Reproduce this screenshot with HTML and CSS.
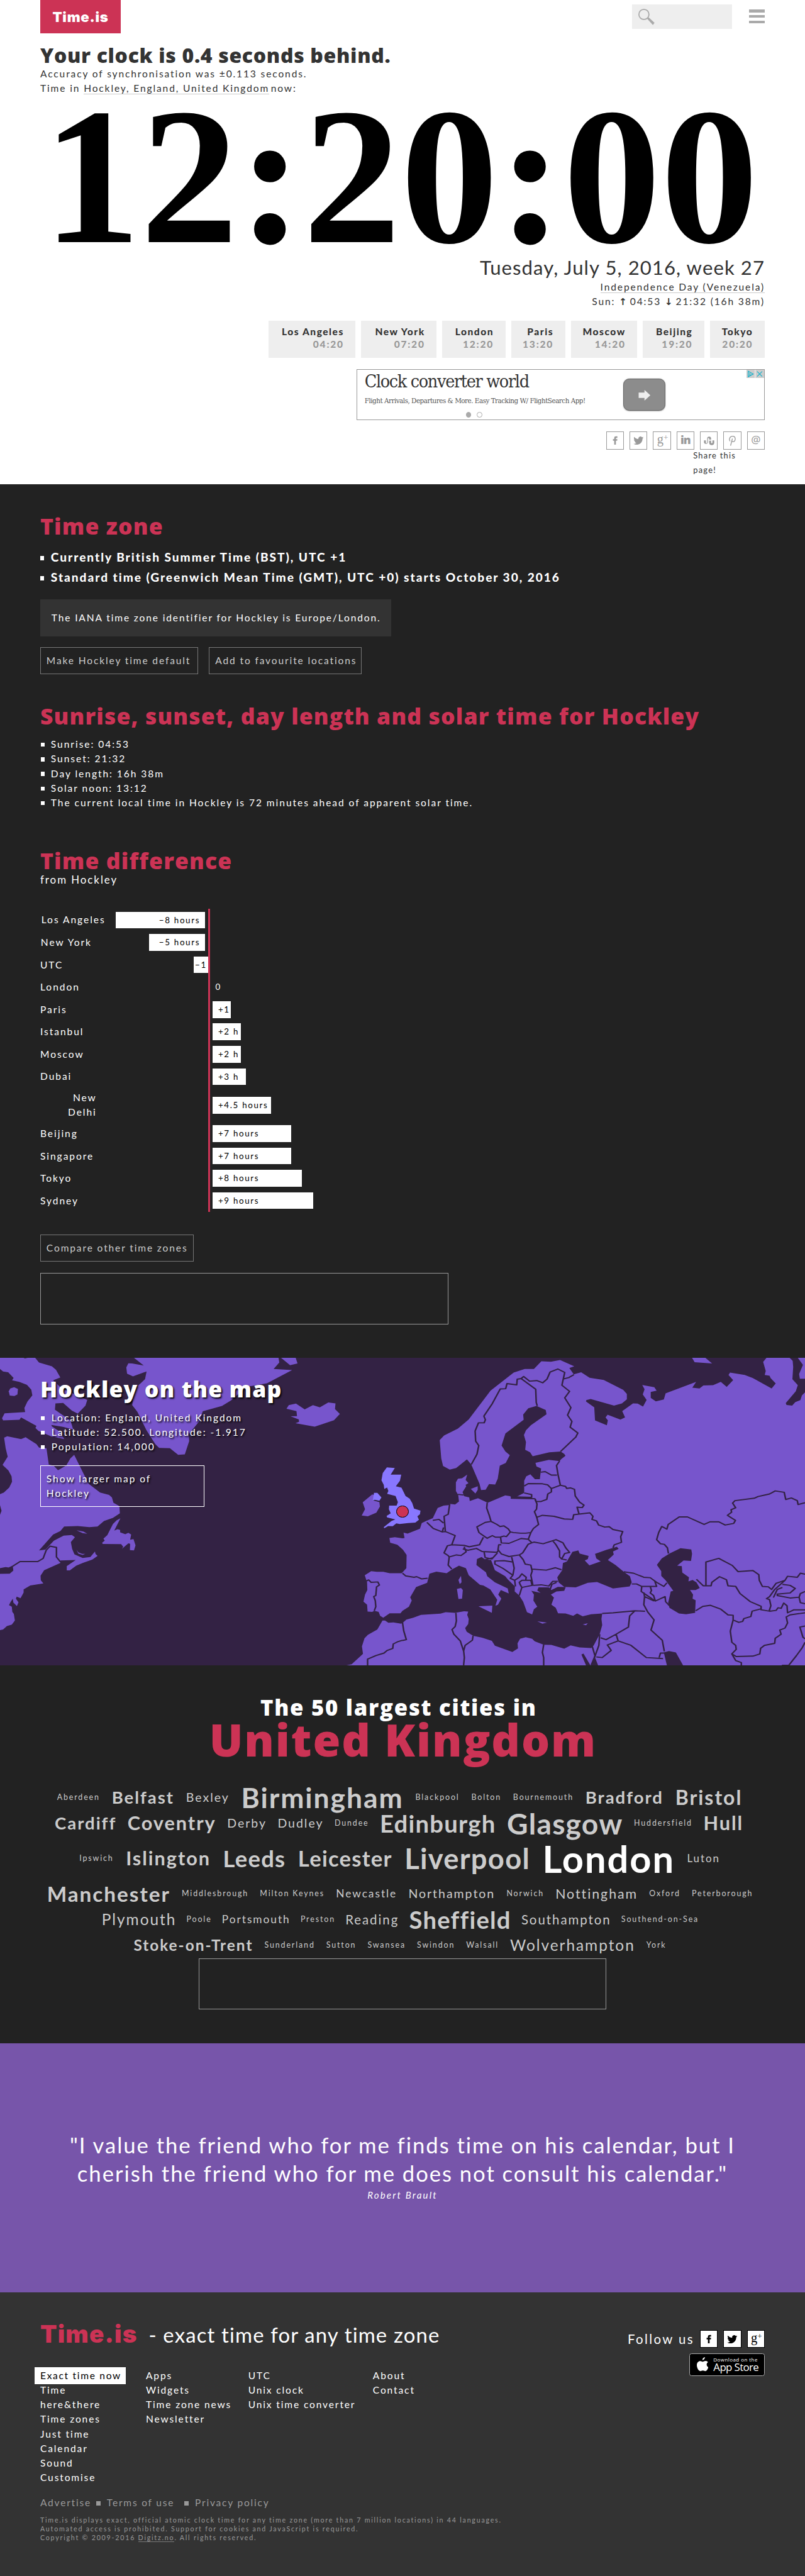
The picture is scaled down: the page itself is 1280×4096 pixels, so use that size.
FILE: index.html
```html
<!DOCTYPE html>
<html lang="en">
<head>
<meta charset="utf-8">
<title>Time in Hockley, England, United Kingdom now</title>
<link rel="stylesheet" href="styles.css">
</head>
<body>
<svg width="0" height="0" class="defs" aria-hidden="true">
  <symbol id="fb" viewBox="0 0 32 32"><path d="M14 24v-7.500h-2.500v-3H14v-2.200C14 8.800 15.500 8 17.500 8H20v3h-1.600c-.9 0-1.200.4-1.200 1.200v1.300H20l-.4 3h-2.400V24z"/></symbol>
  <symbol id="tw" viewBox="0 0 32 32"><path d="M25.500 10.500c-.7.300-1.400.5-2.200.6.800-.5 1.400-1.200 1.700-2.100-.8.400-1.600.8-2.500.9a3.900 3.900 0 0 0-6.700 3.600c-3.300-.2-6.200-1.700-8.100-4.100-1 1.800-.5 4 1.200 5.200-.6 0-1.200-.2-1.800-.5 0 1.900 1.300 3.500 3.100 3.900-.6.100-1.200.2-1.800.1.500 1.500 1.900 2.600 3.700 2.700A7.900 7.900 0 0 1 6.400 22.400c1.700 1.100 3.800 1.700 6 1.700 7.300 0 11.400-6.100 11.100-11.600.8-.5 1.500-1.200 2-2z"/></symbol>
  <symbol id="st" viewBox="0 0 32 32"><path d="M6.500 16h3.500v4a1.300 1.300 0 0 0 2.600 0v-7.500a3.700 3.700 0 0 1 7.400 0V14l-2.100.7-1.500-.7v-1.400a1.200 1.200 0 0 0-2.400 0V20a4 4 0 0 1-7.500 0zM16.400 16l1.500.7 2.100-.7v4a1.300 1.300 0 0 0 2.600 0v-4H26v4a4.300 4.300 0 0 1-9.600 0z"/></symbol>
  <symbol id="pi" viewBox="0 0 32 32"><path d="M12.800 26L16.300 12.500M11.800 17.500C9 13.500 11.500 8 16.800 8c6.700 0 6 10.500.8 10.500-1.400 0-2.300-.7-2.600-1.800" fill="none" stroke="currentColor" stroke-width="1.600"/></symbol>
</svg>

<header class="top">
  <div class="bar">
    <a class="logo">Time.is</a>
    <div class="tools">
      <div class="search"><svg viewBox="0 0 30 30"><circle cx="10" cy="10" r="9" fill="none" stroke="#aaa" stroke-width="2"/><path d="M15 17l3-2 11 10-3 4z" fill="#aaa"/></svg></div>
      <div class="menu"><i></i><i></i><i></i></div>
    </div>
  </div>
  <h1>Your clock is 0.4 seconds behind.</h1>
  <p class="sync">Accuracy of synchronisation was ±0.113 seconds.</p>
  <p class="sync now">Time in <a>Hockley, England, United Kingdom</a><span>now:</span></p>
  <div class="clock">12:20:00</div>
  <div class="date">Tuesday, July 5, 2016, week 27</div>
  <p class="right"><a>Independence Day (Venezuela)</a></p>
  <p class="right sun">Sun: <b>↑</b> 04:53 <b>↓</b> 21:32 (16h 38m)</p>
  <div class="worldclocks">
    <div class="w1">Los Angeles<time>04:20</time></div>
    <div class="w2">New York<time>07:20</time></div>
    <div class="w3">London<time>12:20</time></div>
    <div class="w4">Paris<time>13:20</time></div>
    <div class="w5">Moscow<time>14:20</time></div>
    <div class="w6">Beijing<time>19:20</time></div>
    <div class="w7">Tokyo<time>20:20</time></div>
  </div>
  <div class="ad">
    <div class="adtext">
      <div class="adtitle">Clock converter world</div>
      <div class="adsub">Flight Arrivals, Departures &amp; More. Easy Tracking W/ FlightSearch App!</div>
      <div class="dots"><i></i><i></i></div>
    </div>
    <div class="adbtn"><svg viewBox="0 0 22 20"><path d="M0 5h11V0l11 10-11 10v-5H0z" fill="#eee"/></svg></div>
    <div class="choices"><svg viewBox="0 0 32 15"><path d="M15.500 0v15" stroke="#fff"/><path d="M3 2.500v10l9-5zM6 6v4M19 3l9 9M28 3l-9 9" fill="none" stroke="#1bb3cc" stroke-width="1.400"/></svg></div>
  </div>
  <div class="share">
    <span><svg><use href="#fb"/></svg></span>
    <span><svg><use href="#tw"/></svg></span>
    <span class="gp">g<sup>+</sup></span>
    <span class="in">in</span>
    <span><svg><use href="#st"/></svg></span>
    <span><svg><use href="#pi"/></svg></span>
    <span class="at">@</span>
  </div>
  <p class="sharetext">Share this<br>page!</p>
</header>

<main class="dark">
  <h2 class="tz">Time zone</h2>
  <ul class="big">
    <li class="b1">Currently British Summer Time (BST), UTC +1</li>
    <li>Standard time (Greenwich Mean Time (GMT), UTC +0) starts October 30, 2016</li>
  </ul>
  <div class="iana">The IANA time zone identifier for Hockley is Europe/London.</div>
  <div class="buttons"><a class="btn m1">Make Hockley time default</a><a class="btn m2">Add to favourite locations</a></div>
  <h2 class="sunhead">Sunrise, sunset, day length and solar time for Hockley</h2>
  <ul class="list">
    <li>Sunrise: 04:53</li>
    <li>Sunset: 21:32</li>
    <li>Day length: 16h 38m</li>
    <li>Solar noon: 13:12</li>
    <li>The current local time in Hockley is 72 minutes ahead of apparent solar time.</li>
  </ul>
  <h2 class="diffhead">Time difference</h2>
  <p class="from">from Hockley</p>
  <div class="chart">
    <div class="row"><span>Los Angeles</span><div class="neg"><i style="width:160px">−8 hours</i></div><div class="pos"></div></div>
    <div class="row"><span>New York</span><div class="neg"><i style="width:100px">−5 hours</i></div><div class="pos"></div></div>
    <div class="row"><span>UTC</span><div class="neg utc"><i style="width:25px">−1</i></div><div class="pos"></div></div>
    <div class="row"><span>London</span><div class="neg"></div><div class="pos zero">0</div></div>
    <div class="row"><span>Paris</span><div class="neg"></div><div class="pos"><i style="width:33px">+1</i></div></div>
    <div class="row"><span>Istanbul</span><div class="neg"></div><div class="pos"><i style="width:50px">+2 h</i></div></div>
    <div class="row"><span>Moscow</span><div class="neg"></div><div class="pos"><i style="width:50px">+2 h</i></div></div>
    <div class="row"><span>Dubai</span><div class="neg"></div><div class="pos"><i style="width:60px">+3 h</i></div></div>
    <div class="row tall"><span>New<br>Delhi</span><div class="neg"></div><div class="pos"><i style="width:105px">+4.5 hours</i></div></div>
    <div class="row"><span>Beijing</span><div class="neg"></div><div class="pos"><i style="width:140px">+7 hours</i></div></div>
    <div class="row"><span>Singapore</span><div class="neg"></div><div class="pos"><i style="width:140px">+7 hours</i></div></div>
    <div class="row"><span>Tokyo</span><div class="neg"></div><div class="pos"><i style="width:160px">+8 hours</i></div></div>
    <div class="row"><span>Sydney</span><div class="neg"></div><div class="pos"><i style="width:180px">+9 hours</i></div></div>
  </div>
  <div class="buttons cmp"><a class="btn m3">Compare other time zones</a></div>
  <div class="slot"></div>
</main>

<section class="map">
  <svg class="world" viewBox="0 25 3136 1513" preserveAspectRatio="none">
    <g class="land">
      <path d="M0 25H92L97 28L108 25H137L152 48L202 67L218 84L235 122L207 136L240 175L340 232L333 260L303 300L280 285L246 247L216 249L214 280L250 312L275 335L285 378L245 365L200 355L202 362L235 390L250 425L200 412L150 385L138 370L142 360L82 318L76 330L12 333L8 322L18 298L98 292L95 272L107 240L126 210L122 182L105 158L75 143L47 136L53 124L32 96L12 92L0 80Z"/>
      <path d="M34 190L40 176L55 170L70 178L68 205L56 213L38 211Z"/>
      <path d="M16 418L28 411L82 425L100 416L142 450L152 467L181 470L190 550L209 556L226 578L258 555L274 520L289 502L345 645L390 688L425 700L436 712L442 738L465 755L467 790L440 813L405 828L380 855L348 858L303 853L250 855L235 878L207 895L152 973L177 969L210 925L248 900L280 897L292 908L276 932L281 965L290 992L322 1010L352 1005L370 978L372 990L380 1000L360 1018L322 1035L297 1048L272 1071L260 1071L260 1050L295 1020L236 1022L235 1035L172 1070L158 1097L159 1120L169 1135L118 1145L92 1165L92 1180L80 1208L65 1200L62 1210L72 1228L66 1247L52 1230L50 1210L42 1225L35 1242L46 1250L48 1275L54 1285L58 1318L46 1338L27 1345L12 1362L0 1365V1088L38 1087L52 1072L50 1052L35 1060L22 1058L0 1063V798L6 778L0 750V696L15 688L36 663L47 635L45 608L33 580L10 552L30 512L22 470Z"/>
      <path d="M469 815L445 875L458 868L468 872V884L488 893L500 886L511 895L507 920L520 917L528 948L522 973L506 971L507 940L500 938L475 965L480 955L472 942L400 941L398 935L408 925L403 915L418 898L440 843L455 824Z"/>
      <path d="M298 874L325 880L340 891L322 888ZM298 970L305 982L320 990L332 990L322 995L305 988Z"/>
      <path d="M522 25H1085L1088 48L1066 80L1138 85L1040 150L960 168L900 235L865 262L790 288L775 340L735 400L737 435L720 500L694 502L662 470L620 468L605 450L570 380L535 290L515 258L520 200L540 160L565 130L571 92L560 97L518 116L495 103L492 72L500 52L515 53L560 63Z"/>
      <path d="M1095 25H1152L1159 53L1130 61Z"/>
      <path d="M1116 276L1125 258L1153 250L1187 279L1219 258L1246 269L1279 245L1307 249L1305 277L1324 301L1301 332L1226 364L1151 347L1165 340L1164 328L1132 313L1157 312L1155 287Z"/>
      <path d="M1450 697L1456 700L1454 727L1478 735L1480 757L1466 787L1433 805L1409 801L1422 770L1413 736Z"/>
    </g>
    <g class="uk">
      <path d="M1507 564L1538 567L1522 600L1563 600L1558 630L1542 657L1564 664L1580 705L1596 718L1606 740L1613 767L1638 777L1636 795L1626 805L1632 822L1618 836L1590 838L1557 843L1544 840L1530 854L1512 853L1497 864L1495 858L1525 828L1540 820L1508 810L1506 803L1522 790L1515 770L1516 752L1545 752L1550 735L1541 705L1508 694L1513 680L1508 663L1497 670L1495 650L1486 628L1491 592Z"/>
      <path d="M1457 690L1470 690L1486 712L1478 728L1460 724L1452 727Z"/>
    </g>
    <g transform="translate(1568 0)">
      <g class="land">
        <path d="M-51 912L-30 908L0 913L8 912L4 885L20 890L68 866L75 838L92 828L118 814L137 764L160 752L180 750L184 744L205 747L220 732L217 700L208 680L208 638L216 620L232 618L252 600L246 626L257 642L246 650L248 658L234 686L240 706L260 712L262 730L294 716L315 728L332 738L400 702L420 706L424 716L443 710L474 690V630L482 608L498 598L516 622L535 622L540 570L522 560L518 542L570 527L612 533L618 524L635 507L630 498L616 486L572 490L507 509L497 490L478 478L481 440L473 405L481 382L500 357L561 303L558 282L522 262L490 273L470 304L472 330L401 397L386 457L401 486L418 504L402 543L379 556L371 620L361 649L337 646L324 674L306 676L300 645L268 550L251 525L209 567L184 575L158 557L151 520L145 430L162 407L216 373L258 328L343 187L433 98L476 80L512 80L541 42L578 44L614 36L669 67L650 75L667 106L696 96L729 123L784 134L860 183L874 203V229L855 249L824 260L733 228L716 233L715 240L747 269L750 333L796 357L800 333L791 318L799 305L849 329L867 318L856 287L898 249L916 250L937 265L951 232L936 205L943 180L934 159L981 170L990 187L967 193V222L987 239L1018 230L1025 200L1144 143L1129 172L1157 176L1172 161L1210 160L1240 143L1263 168L1288 135L1270 109L1276 98L1333 109L1365 125L1438 176L1454 151L1434 125L1430 113L1411 109L1415 90L1405 45L1418 25H1508L1520 40L1522 70L1519 130L1540 160L1532 190L1493 248L1496 257L1518 260L1530 243L1550 233L1556 210L1568 195V1538H-218L-198 1533L-154 1482L-158 1445L-148 1405L-135 1388L-98 1362L-78 1318L-68 1318L-55 1329L-35 1327L-6 1333L0 1330L15 1313L42 1304L72 1290L148 1284L168 1277L205 1280L240 1272L256 1274L252 1290L258 1310L256 1335L244 1355L250 1373L275 1393L310 1402L348 1418L360 1442L428 1473L450 1455L448 1430L458 1408L480 1400L505 1408L515 1420L550 1437L580 1438L630 1456L655 1440L690 1450L735 1453L745 1440L768 1385L778 1340L775 1310L778 1283L735 1287L702 1297L680 1283L665 1295L635 1283L606 1282L597 1255L580 1240L590 1205L578 1190L600 1175L630 1172L636 1153L605 1152L580 1168L570 1155L530 1155L525 1170L538 1182L502 1172L512 1190L510 1220L525 1250L512 1262L505 1288L485 1277L470 1225L455 1195L437 1175L438 1150L410 1115L400 1100L360 1070L345 1020L322 1018L308 1005L290 1015L288 1045L325 1080L330 1100L360 1130L410 1160L414 1185L383 1168L373 1190L385 1210L372 1240L362 1245L369 1216L342 1165L315 1145L302 1142L258 1095L247 1060L220 1048L194 1066L172 1085L132 1077L105 1087L96 1132L53 1153L30 1203L36 1220L25 1250L0 1270L-8 1282H-50L-75 1304L-87 1295L-93 1275L-110 1270L-118 1275L-136 1274L-138 1240L-152 1225L-146 1190L-137 1168L-138 1130L-147 1095L-122 1075L-100 1078H-75L-50 1085H-3L15 1060L16 995L2 970L-20 945L-48 935Z"/>
        <path d="M212 1162L228 1158L235 1168L232 1210L218 1212ZM218 1118L228 1098L230 1130L223 1138ZM296 1248L350 1244L348 1280ZM525 1322L563 1328L545 1333ZM702 1337L722 1331L715 1341ZM266 670L293 657V675L284 693ZM1128 25H1180L1206 53L1138 47ZM1540 25H1568V128H1548L1545 105L1560 60Z"/>
      </g>
      <g class="water">
        <path d="M603 1105L622 1070L625 1035L640 1028L662 980L685 973L690 988L725 1000L722 1015L710 1022L728 1046L772 1027L755 1012L750 990L795 970L835 955L842 965L820 978L823 993L800 1020L830 1045L862 1078L886 1100L893 1130L885 1150L820 1160L758 1128L722 1132L675 1155L630 1152L608 1130Z"/>
        <path d="M991 1044L1010 1012L1040 988L1083 962L1125 968L1128 990L1124 1025L1095 1022L1070 1048L1088 1050L1090 1082L1116 1105L1114 1125L1130 1118L1145 1130L1158 1158L1142 1168L1120 1168L1132 1190L1130 1210L1142 1218L1140 1280L1105 1287L1077 1283L1040 1255L1035 1230L1045 1175L1055 1172L1025 1120L1008 1098L1008 1075Z"/>
        <path d="M1018 1475L1038 1468L1065 1475L1093 1538H1030ZM697 1485L705 1480L732 1538H715ZM735 1538L750 1500L762 1538Z"/>
      </g>
    </g>
    <g class="borders" transform="translate(1568 0)">
      <path d="M-1568 1063L-1546 1058L-1533 1060L-1518 1050L-1490 1028H-1421L-1400 1012L-1388 972L-1373 952L-1348 958V1005L-1332 1030"/>
      <path d="M268 550L290 500L297 457L285 435L283 385L296 345L318 345L323 330L317 312L350 250L381 178L402 177L407 152L445 158L447 130L462 127L519 180L521 245L525 262"/>
      <path d="M462 127L472 117L495 140L523 137L546 148L563 130L575 95L605 80L632 97L621 160L651 190L632 222L656 270L643 307L660 338L653 366L683 395L675 415L616 486M625 130L648 122L668 108"/>
      <path d="M612 533L600 555L606 600L615 652L580 668L565 650L545 645L490 644L474 656M538 588L556 585L580 602H602M474 690L503 698V712L443 710L424 716L516 718M516 718L520 732H540L562 722L566 695L580 685V668M615 652L635 658L640 668L655 665L670 672L673 705L690 735L707 750L700 762L680 760L688 795"/>
      <path d="M516 718L524 745L522 770L514 782L523 810L545 800L590 805L630 818L663 820L667 797L730 788L742 805L738 820L756 828L764 848L788 858L805 856L820 870L858 880L850 905L853 933L825 945L820 960"/>
      <path d="M523 810L530 845L510 865L500 885L480 888H460L432 885L420 882L412 867L395 852L380 855L368 845L345 830L338 800L328 765L330 738M345 830L322 835L290 857L298 885L330 913L350 900L362 908L382 907L395 902L405 905L420 882M500 885L490 918L462 914L415 938L385 936L382 907M490 918L504 935L490 942L468 985L455 995L415 1003L385 990L372 970L375 945H385M504 935L512 932L548 940L585 925L598 920L625 935L636 960L651 983L632 988L620 1015L612 1005V975L598 945L585 925M620 1015L640 1020"/>
      <path d="M216 697L238 700M184 744L178 795L162 805L167 880L205 900L192 945L240 948L260 955L300 945L308 925L315 908M167 880L155 882L120 865L95 835M118 825L142 820L160 838M155 882L160 860M192 945L175 950L162 985L178 998L182 1005L210 995L228 998L248 980L240 955M235 965L255 972L288 963L310 978L368 982L375 970M182 1005L178 1045L192 1065M318 982L322 1008L348 1015L370 985M322 1018L355 1008M0 1085L12 1098L45 1105L55 1102L75 1113L98 1110"/>
      <path d="M360 1025L395 1023L430 1030L435 1060L430 1095L392 1062L360 1040ZM430 1030L425 1005M455 995L470 1018L478 1040L500 1045L505 1075L500 1095L508 1145M505 1065L560 1070L596 1058L620 1068M430 1095L420 1110L437 1120L455 1105L465 1088L482 1105L480 1120H500M455 1130L465 1120L500 1120L505 1145L465 1155L458 1140ZM508 1145L540 1142L570 1148L585 1125H605M437 1120L440 1150M465 1155L455 1195M575 1165L582 1140L600 1130"/>
      <path d="M862 1078L900 1085L940 1105L965 1107L990 1130L1018 1150L1030 1132M893 1138H912L932 1150H990L983 1125M932 1150L930 1175L965 1205L985 1222L1023 1200L1025 1225L1040 1245M965 1150L970 1170L965 1182L978 1195L985 1222M940 1180L943 1200L980 1222M943 1200L940 1240L955 1275L980 1315L968 1365L1012 1415L1020 1470M778 1283L820 1280L905 1270L945 1272M905 1270L885 1295L880 1350L832 1385L793 1412L772 1403M832 1385L840 1418L890 1440L950 1500L1015 1505M840 1418L798 1438L813 1465L778 1500L755 1497M1000 1500L1005 1478L1020 1478M768 1385L765 1440L748 1500"/>
      <path d="M738 1440L750 1492L735 1538M550 1437L545 1475L550 1500V1538M275 1393L272 1415L244 1440L238 1468L225 1418L200 1385L193 1362L205 1348L210 1320L208 1280M238 1465L241 1500L238 1538M0 1328L5 1370L15 1412L0 1416M-136 1538V1508L-103 1490L-72 1478L-60 1465L-38 1455L-36 1433L-20 1423L0 1415M-143 1125L-132 1118L-122 1130L-96 1128L-90 1143L-101 1152L-104 1195L-112 1200L-106 1220L-104 1250L-110 1270"/>
      <path d="M1036 988L1032 960L1020 943L1005 940L990 920L998 885L1010 855L1030 868L1035 845L1078 808H1110L1175 845L1198 832H1232L1257 848L1290 840L1297 825L1266 800L1282 785L1280 773L1298 763L1286 740L1295 728L1370 716L1385 708L1430 695L1452 680L1487 687L1493 722L1515 715L1538 728L1541 747L1568 738"/>
      <path d="M1182 1147V1030L1232 1012L1285 1047L1307 1077L1365 1072L1388 1092L1390 1120L1402 1150L1425 1152L1438 1165L1455 1135L1490 1120L1500 1100L1538 1105L1550 1085L1568 1090M1145 1115L1172 1147H1202L1205 1130L1235 1102L1262 1117L1268 1147L1298 1150L1315 1185L1355 1225L1397 1248V1265L1430 1272L1455 1268L1463 1255L1475 1258L1485 1232L1498 1245L1500 1280L1525 1265H1568M1480 1140L1510 1145L1530 1160L1510 1182L1460 1188V1195L1510 1207L1545 1203L1550 1185L1568 1175M1490 1120L1450 1165L1430 1200L1418 1210L1430 1215L1435 1245L1428 1272M1480 1155L1460 1165L1445 1205M1142 1270L1170 1248L1200 1243L1240 1262L1268 1290L1288 1292V1315L1310 1327L1325 1322L1330 1308L1357 1298L1362 1272L1397 1260M1288 1315L1277 1370L1283 1425L1298 1440L1300 1460L1283 1482L1300 1495L1365 1493L1392 1482L1395 1455L1410 1440L1450 1430L1452 1405L1475 1385L1470 1365L1490 1355L1500 1330L1495 1300L1510 1290L1568 1280M1283 1482L1298 1515L1320 1525V1538M1478 1538H1505L1535 1490L1558 1450L1568 1425M1568 1345L1548 1350L1560 1400L1568 1408M1545 1203L1550 1230L1568 1235"/>
    </g>
  </svg>
  <div class="pin"></div>
  <div class="mapinfo">
    <h2>Hockley on the map</h2>
    <ul class="list">
      <li>Location: England, United Kingdom</li>
      <li>Latitude: 52.500. Longitude: -1.917</li>
      <li>Population: 14,000</li>
    </ul>
    <a class="larger">Show larger map of<br>Hockley</a>
  </div>
</section>

<section class="cities">
  <h2>The 50 largest cities in</h2>
  <h3>United Kingdom</h3>
  <div class="line l1"><a class="c14">Aberdeen</a><a class="c31">Belfast</a><a class="c22">Bexley</a><a class="c50">Birmingham</a><a class="c14">Blackpool</a><a class="c14">Bolton</a><a class="c14">Bournemouth</a><a class="c31">Bradford</a><a class="c36">Bristol</a></div>
  <div class="line l2"><a class="c31">Cardiff</a><a class="c34">Coventry</a><a class="c22">Derby</a><a class="c22">Dudley</a><a class="c14">Dundee</a><a class="c43">Edinburgh</a><a class="c52">Glasgow</a><a class="c14">Huddersfield</a><a class="c34">Hull</a></div>
  <div class="line l3"><a class="c14">Ipswich</a><a class="c34">Islington</a><a class="c41">Leeds</a><a class="c39">Leicester</a><a class="c51">Liverpool</a><a class="c67">London</a><a class="c19">Luton</a></div>
  <div class="line l4"><a class="c38">Manchester</a><a class="c14">Middlesbrough</a><a class="c14">Milton Keynes</a><a class="c20">Newcastle</a><a class="c22">Northampton</a><a class="c14">Norwich</a><a class="c24">Nottingham</a><a class="c14">Oxford</a><a class="c14">Peterborough</a></div>
  <div class="line l5"><a class="c28">Plymouth</a><a class="c14">Poole</a><a class="c20">Portsmouth</a><a class="c14">Preston</a><a class="c23">Reading</a><a class="c43">Sheffield</a><a class="c23">Southampton</a><a class="c14">Southend-on-Sea</a></div>
  <div class="line l6"><a class="c28 bold">Stoke-on-Trent</a><a class="c14">Sunderland</a><a class="c14">Sutton</a><a class="c14">Swansea</a><a class="c14">Swindon</a><a class="c14">Walsall</a><a class="c28">Wolverhampton</a><a class="c14">York</a></div>
  <div class="slot"></div>
</section>

<section class="quote">
  <p class="q1">"I value the friend who for me finds time on his calendar, but I</p>
  <p class="q2">cherish the friend who for me does not consult his calendar."</p>
  <p class="who">Robert Brault</p>
</section>

<footer>
  <div class="ftop">
    <div class="brand"><b>Time.is</b><span>- exact time for any time zone</span></div>
    <div class="follow">
      <div class="frow">Follow us
        <span><svg><use href="#fb"/></svg></span>
        <span><svg><use href="#tw"/></svg></span>
        <span class="gp">g<sup>+</sup></span>
      </div>
      <div class="store">
        <svg viewBox="0 0 21 26"><path d="M14.500 0c.2 2.500-2 5-4.500 5.200C9.700 2.800 12 .4 14.500 0zM20 9c-3.600 2.200-3 7.400.8 9-1.200 3.400-3.200 7-5.400 7-1.800 0-2.400-1.100-4.600-1.100S7.800 25 6.200 25C3 25 0 19 0 14.200 0 9.400 3 6.900 6 6.900c2 0 3.400 1.300 4.800 1.300 1.300 0 2.800-1.400 5.200-1.400 1.600 0 3.100.8 4 2.200z" fill="#fff"/></svg>
        <div><small>Download on the</small><strong>App Store</strong></div>
      </div>
    </div>
  </div>
  <nav>
    <div class="n1"><a class="current">Exact time now</a><a>Time<br>here&amp;there</a><a>Time zones</a><a>Just time</a><a>Calendar</a><a>Sound</a><a>Customise</a></div>
    <div class="n2"><a>Apps</a><a>Widgets</a><a>Time zone news</a><a>Newsletter</a></div>
    <div class="n3"><a>UTC</a><a>Unix clock</a><a>Unix time converter</a></div>
    <div class="n4"><a>About</a><a>Contact</a></div>
  </nav>
  <div class="legal"><a>Advertise</a><i></i><a>Terms of use</a><i class="gap"></i><a>Privacy policy</a></div>
  <p class="fine">Time.is displays exact, official atomic clock time for any time zone (more than 7 million locations) in 44 languages.<br>Automated access is prohibited. Support for cookies and JavaScript is required.<br>Copyright © 2009-2016 <u>Digitz.no</u>. All rights reserved.</p>
</footer>
</body>
</html>
```
FILE: styles.css
```css
html { zoom: 0.888888; background: #333; overflow: hidden; }
* { box-sizing: border-box; }
body, h1, h2, h3, p, ul { margin: 0; padding: 0; }
body {
  height: 4607px;
  overflow: hidden;
  background: #333;
  color: #333;
  font: 17.5px/26px Lato, "Noto Sans", sans-serif;
  letter-spacing: 2.2px;
  font-variant-ligatures: none;
}
.defs { position: absolute; }
svg { display: block; fill: currentColor; }
h1, h2, h3 { font-family: "Open Sans", sans-serif; font-weight: 800; white-space: nowrap; }
p, a, li, span { white-space: nowrap; }
i { font-style: normal; }

/* header */
.top { height: 866px; padding: 0 72px; background: #fff; }
.bar { display: flex; justify-content: space-between; height: 60px; }
.logo { width: 144px; height: 60px; background: #cc3355; color: #fff; font: 900 25px/60px Inter, sans-serif; letter-spacing: .8px; text-align: center; }
.tools { display: flex; padding-top: 8px; }
.search { width: 180px; height: 44px; background: #eee; padding: 8px 12px; }
.search svg { width: 30px; height: 30px; }
.menu { margin: 9px 0 0 30px; display: flex; flex-direction: column; gap: 5px; }
.menu i { width: 28px; height: 5px; background: #aaa; }
h1 { margin-top: 19px; font-size: 36px; line-height: 40px; letter-spacing: .75px; }
.now a { border-bottom: 1px solid #ccc; }
.now span { margin-left: 3px; }
.sync { letter-spacing: 2.1px; }
.clock { margin: 25px 0 0 5px; height: 240px; font: bold 349px/240px "Liberation Serif", serif; letter-spacing: 0; color: #000; white-space: nowrap; }
.date { margin-top: 23px; text-align: right; font-size: 35px; line-height: 40px; letter-spacing: 1.2px; }
.right { margin-top: 2px; text-align: right; letter-spacing: 2.1px; }
.right a { border-bottom: 1px solid #ccc; }
.sun { margin-top: 0; }
.sun b { font: bold 17px/20px "DejaVu Sans", sans-serif; letter-spacing: -1px; }
.worldclocks { display: flex; justify-content: flex-end; gap: 10px; margin-top: 21px; font-weight: 900; }
.worldclocks div { height: 66px; padding: 9px 21px 0 0; background: #eee; text-align: right; line-height: 22px; letter-spacing: 1.7px; white-space: nowrap; }
.worldclocks time { display: block; color: #999; letter-spacing: 2px; }
.w1 { width: 156px; } .w2 { width: 135px; } .w3 { width: 113px; } .w4 { width: 97px; } .w5 { width: 119px; } .w6 { width: 110px; } .w7 { width: 98px; }
.ad { display: flex; width: 730px; height: 92px; margin: 20px 0 0 auto; border: 1px solid #999; letter-spacing: 0; }
.adtext { width: 476px; padding: 4px 0 0 13px; font-family: "DejaVu Serif Condensed", "DejaVu Serif", serif; font-stretch: condensed; white-space: nowrap; }
.adtitle { font-size: 32px; line-height: 36px; letter-spacing: -1.5px; }
.adsub { margin-top: 4px; color: #555; font-size: 13px; line-height: 24px; letter-spacing: -.55px; }
.dots { display: flex; gap: 10px; padding: 8px 0 0 181px; }
.dots i { width: 10px; height: 10px; border-radius: 50%; border: 1px solid #aaa; }
.dots i:first-child { background: #aaa; }
.adbtn { width: 75px; height: 58px; margin-top: 16px; padding: 19px 26px; border: 1px solid #666; border-radius: 11px; background: #8c8c8c; box-shadow: 0 1px 2px #aaa; }
.adbtn svg { width: 22px; height: 19px; }
.choices { width: 32px; height: 15px; margin-left: auto; background: #ccc; }
.share { display: flex; justify-content: flex-end; gap: 10px; margin-top: 20px; color: #999; }
.share span { width: 32px; height: 32px; border: 1px solid #999; }
.share svg, .frow svg { width: 30px; height: 30px; }
.share .gp, .frow .gp { font: 23px/26px "Liberation Serif", serif; letter-spacing: 0; padding-left: 6px; }
.gp sup { font-size: 15px; line-height: 0; vertical-align: 6px; }
.share .in { font: 800 20px/28px "Open Sans", sans-serif; letter-spacing: -1px; text-align: center; }
.share .at { font: 19px/28px "Noto Sans", sans-serif; letter-spacing: 0; text-align: center; }
.sharetext { width: 128px; margin: -2px 0 0 auto; font-size: 14.5px; letter-spacing: 1.4px; }

/* dark column */
.dark { height: 1563px; padding: 51px 72px 0; background: #222; color: #fff; }
.dark h2 { color: #cc3355; font-size: 40px; line-height: 48px; letter-spacing: 1.25px; }
ul { list-style: none; }
li { position: relative; padding-left: 19px; }
li::before { content: ""; position: absolute; left: 1px; top: 10px; width: 7px; height: 7px; background: currentColor; }
.big { margin-top: 14px; font-size: 21.5px; line-height: 36px; font-weight: 900; letter-spacing: 2.2px; }
.big li::before { left: 0; top: 15px; width: 7px; height: 8px; }
.iana { width: 628px; height: 66px; margin-top: 21px; padding: 20px; background: #333; letter-spacing: 2.1px; white-space: nowrap; }
.buttons { display: flex; gap: 20px; margin-top: 20px; }
.btn { height: 48px; padding: 10px; border: 1px solid #777; color: #ccc; letter-spacing: 2.1px; }
.m1 { width: 282px; } .m2 { width: 273px; } .m3 { width: 275px; }
.dark .sunhead { margin-top: 51px; }
.sunhead + .list { margin-top: 14px; }
.diffhead { margin-top: 67px; }
.from { margin-top: -4px; font-size: 19px; }
.chart { margin-top: 40px; }
.row { display: grid; grid-template-columns: 101px 199px 190px; height: 40px; align-items: center; }
.row > span { position: relative; }
.row:nth-child(1) > span { left: 2px; }
.row:nth-child(2) > span { left: 1px; }
.tall { height: 62px; }
.tall > span { text-align: right; }
.neg { height: 100%; padding-right: 5px; display: flex; justify-content: flex-end; align-items: center; }
.pos { height: 100%; border-left: 4px solid #cc3355; padding-left: 5px; display: flex; align-items: center; font-size: 15px; }
.zero { padding-left: 10px; }
.row i { height: 30px; background: #fff; color: #000; font-size: 15px; line-height: 30px; letter-spacing: 1.9px; overflow: hidden; white-space: nowrap; padding-left: 10px; }
.neg i { padding: 0 9px 0 0; text-align: right; }
.utc { padding-right: 0; }
.utc i { padding: 0 2px 0 0; }
.cmp { margin-top: 41px; }
.slot { width: 730px; height: 92px; border: 1px solid #999; }
.dark .slot { margin-top: 20px; }

/* map */
.map { position: relative; height: 550px; background: #332244; color: #fff; overflow: hidden; }
.world { position: absolute; inset: 0; width: 100%; height: 100%; }
.land { fill: #7755cc; }
.uk { fill: #8877ff; }
.water { fill: #332244; }
.borders { fill: none; stroke: #332244; stroke-width: 6; stroke-linejoin: round; }
.pin { position: absolute; left: 709px; top: 264px; width: 22px; height: 22px; border-radius: 50%; border: 2px solid #000; background: #cc3355; }
.mapinfo { position: relative; padding: 31px 72px; text-shadow: 2px 2px 3px #000; }
.mapinfo h2 { font-size: 40px; line-height: 48px; letter-spacing: 1.25px; }
.mapinfo .list { margin-top: 15px; }
.mapinfo li { padding-left: 20px; }
.larger { display: block; width: 294px; height: 74px; margin-top: 20px; padding: 10px; border: 1px solid #fff; }

/* cities */
.cities { height: 676px; padding-top: 52px; background: #222; color: #ccc; text-align: center; }
.cities h2 { margin-left: -14px; color: #fff; font-size: 39px; line-height: 48px; letter-spacing: 1.95px; }
.cities h3 { margin: -8px 0 42px 2px; color: #cc3355; font-size: 80px; line-height: 80px; letter-spacing: 2.1px; }
.line { display: flex; justify-content: space-between; align-items: center; height: 46px; line-height: 46px; }
.l1 { margin: 0 112px 0 102px; }
.l2 { margin: 0 110px 0 98px; }
.l3 { margin: 0 152px 0 142px; height: 80px; }
.l4 { margin: 0 93px 0 84px; }
.l5 { margin: 0 190px 0 182px; }
.l6 { margin: 0 248px 0 239px; }
.c14 { font-size: 14px; letter-spacing: 2.1px; } .c19 { font-size: 19px; } .c20 { font-size: 19.500px; } .c22 { font-size: 22px; } .c23 { font-size: 23px; } .c24 { font-size: 24px; } .c28 { font-size: 27.500px; }
.c31, .c34, .c36, .c38, .c39, .c41, .c43, .c50, .c51, .c52, .c67, .bold { font-weight: 700; }
.c31 { font-size: 31px; } .c34 { font-size: 34.500px; } .c36 { font-size: 36px; } .c38 { font-size: 37.500px; } .c39 { font-size: 39px; } .c41 { font-size: 41px; } .c43 { font-size: 43px; } .c50 { font-size: 50px; } .c51 { font-size: 51px; } .c52 { font-size: 52px; }
.c39, .c41, .c43, .c51, .c52 { letter-spacing: 1.4px; }
.c67 { font-size: 67px; color: #fff; }
.cities .slot { margin: 0 auto; }

/* quote */
.quote { height: 446px; padding-top: 158px; background: #7755aa; color: #fff; text-align: center; }
.quote p { font-size: 39px; line-height: 50px; letter-spacing: 2.2px; }
.quote .who { font-size: 17px; line-height: 28px; font-style: italic; letter-spacing: 2.4px; }

/* footer */
footer { height: 506px; padding: 53px 72px 0; background: #333; color: #fff; }
.ftop { display: flex; justify-content: space-between; height: 81px; }
.brand { display: flex; gap: 19px; height: 48px; line-height: 48px; align-items: baseline; }
.brand b { width: 175px; color: #cc3355; font: 900 43.500px/44px Inter, sans-serif; letter-spacing: 1.3px; }
.brand span { font-size: 37px; letter-spacing: 1.3px; }
.follow { display: flex; flex-direction: column; align-items: flex-end; padding-top: 14px; }
.frow { display: flex; gap: 10px; font-size: 23px; line-height: 32px; letter-spacing: 2.7px; }
.frow span { width: 32px; height: 32px; border: 1px solid #000; background: #fff; color: #000; }
.store { display: flex; gap: 9px; flex: none; width: 135px; height: 40px; margin-top: 10px; padding: 5px 12px; border: 1px solid #aaa; border-radius: 4px; background: #000; letter-spacing: 0; white-space: nowrap; }
.store svg { width: 21px; height: 26px; flex: none; }
.store small, .store strong { display: block; font-family: "Open Sans", sans-serif; }
.store small { font-size: 9px; line-height: 9px; letter-spacing: .5px; }
.store strong { font-size: 19px; line-height: 19px; font-weight: 500; letter-spacing: -.7px; }
nav { display: flex; height: 230px; }
nav a { display: block; letter-spacing: 2.1px; }
nav .current { height: 30px; width: 163px; margin: 0 0 -2px -10px; padding: 2px 0 2px 10px; background: #fff; color: #000; letter-spacing: 1.9px; }
.n1 { width: 189px; } .n2 { width: 183px; padding-top: 2px; } .n3 { width: 223px; padding-top: 2px; } .n4 { padding-top: 2px; }
.legal { display: flex; align-items: center; margin-top: -1px; color: #999; letter-spacing: 2px; }
.legal i { width: 8px; height: 8px; margin: 3px 11px 0 9px; background: #999; }
.legal .gap { margin-left: 18px; }
.fine { margin-top: 10px; color: #999; font-size: 12px; line-height: 16px; letter-spacing: 2px; }
.fine u { text-decoration: none; border-bottom: 1px solid #777; }
```
